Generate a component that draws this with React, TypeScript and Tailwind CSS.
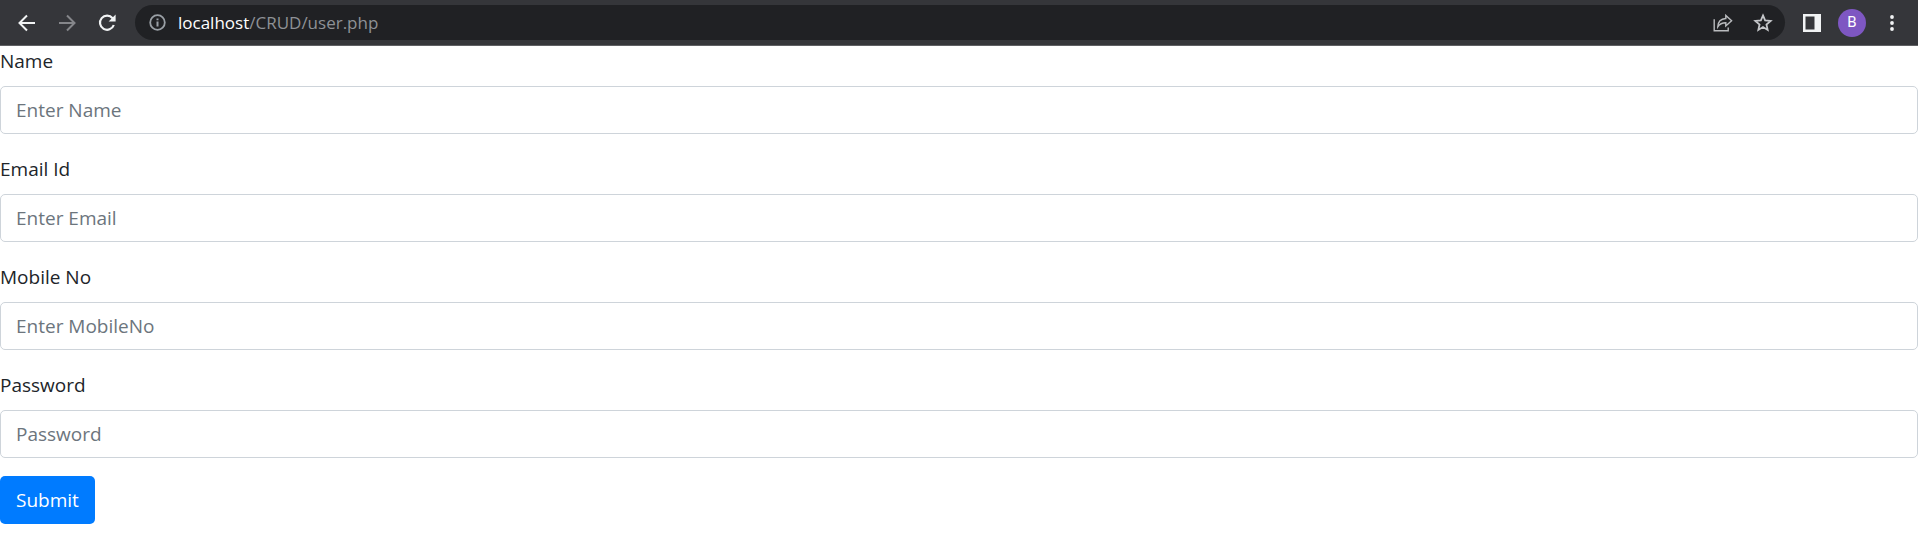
import React from "react";

const fields = [
  { id: "name", label: "Name", placeholder: "Enter Name", type: "text" },
  { id: "email", label: "Email Id", placeholder: "Enter Email", type: "email" },
  { id: "mobile", label: "Mobile No", placeholder: "Enter MobileNo", type: "text" },
  { id: "password", label: "Password", placeholder: "Password", type: "password" },
];

const iconButton = "flex size-7 shrink-0 items-center justify-center rounded-full";

function BrowserBar() {
  return (
    <header className="flex items-center border-b border-[#5f6063] bg-[#35363a] pt-[5px] pr-3 pb-[5px] pl-[13px]">
      <nav aria-label="Browser" className="mr-[14px] flex gap-3">
        <button type="button" aria-label="Back" className={iconButton}>
          <svg width="18" height="18" viewBox="0 0 18 18" fill="none" stroke="#f1f3f4" strokeWidth="2">
            <path d="M17 9H2M9 1.5 1.5 9 9 16.5" />
          </svg>
        </button>
        <button type="button" aria-label="Forward" className={iconButton}>
          <svg width="18" height="18" viewBox="0 0 18 18" fill="none" stroke="#85868a" strokeWidth="2">
            <path d="M1 9H16M9 1.5 16.5 9 9 16.5" />
          </svg>
        </button>
        <button type="button" aria-label="Reload" className={iconButton}>
          <svg width="18" height="18" viewBox="0 0 18 18" fill="none">
            <path d="M14.6 4.2A7.1 7.1 0 1 0 15.8 11" stroke="#f1f3f4" strokeWidth="2.2" />
            <path d="M17.6 0.6V7.6H10.6z" fill="#f1f3f4" />
          </svg>
        </button>
      </nav>
      <div className="flex h-[35px] min-w-0 flex-1 items-center rounded-full bg-[#202124] pr-2 pl-2">
        <button type="button" aria-label="View site information" className={iconButton}>
          <svg width="17" height="17" viewBox="0 0 17 17" fill="none">
            <circle cx="8.5" cy="8.5" r="7.3" stroke="#9aa0a6" strokeWidth="1.8" />
            <path d="M8.5 7.5v5M8.5 4.4v1.9" stroke="#9aa0a6" strokeWidth="2" />
          </svg>
        </button>
        <div className="ml-[7px] min-w-0 flex-1 truncate text-[17px] leading-6 text-[#8e9196]">
          <span className="text-white">localhost</span>/CRUD/user.php
        </div>
        <div className="flex gap-3">
          <button type="button" aria-label="Share" className={iconButton}>
            <svg width="20" height="18" viewBox="0 0 20 18" fill="none" stroke="#b9bbbe" strokeWidth="1.4">
              <path d="M1.2 5.2V16.8H15.2V13.6" />
              <path d="M4.8 12.8C5 7.8 7.8 4.8 12.8 4.5V1.4L18.6 6.7 12.8 12V8.8C9.2 8.8 6.6 10 4.8 12.8z" />
            </svg>
          </button>
          <button type="button" aria-label="Bookmark this page" className={iconButton}>
            <svg width="20" height="20" viewBox="0 0 18 18" fill="none" stroke="#c4c6c9" strokeWidth="1.6">
              <path d="M9 2.2 10.9 6.7 15.9 7.1 12.1 10.4 13.2 15.2 9 12.7 4.8 15.2 5.9 10.4 2.1 7.1 7.1 6.7z" />
            </svg>
          </button>
        </div>
      </div>
      <div className="ml-[13px] flex items-center gap-3">
        <button type="button" aria-label="Side panel" className={iconButton}>
          <svg width="18" height="18" viewBox="0 0 18 18">
            <path fillRule="evenodd" fill="#f1f3f4" d="M0 0H18V18H0zM2.5 2.5V15.5H11.5V2.5z" />
          </svg>
        </button>
        <button
          type="button"
          aria-label="Profile"
          className="flex size-7 items-center justify-center rounded-full bg-[#7e57c2] font-['Roboto',sans-serif] text-[15px] text-white"
        >
          B
        </button>
        <button type="button" aria-label="Menu" className={iconButton}>
          <svg width="4" height="18" viewBox="0 0 4 18" fill="#f1f3f4">
            <circle cx="2" cy="3" r="1.9" />
            <circle cx="2" cy="9" r="1.9" />
            <circle cx="2" cy="15" r="1.9" />
          </svg>
        </button>
      </div>
    </header>
  );
}

export default function App() {
  return (
    <div className="min-h-screen bg-white font-['Open_Sans',sans-serif] text-[#212529]">
      <BrowserBar />
      <form className="text-[19px] leading-[30px]" onSubmit={(e) => e.preventDefault()}>
        <div className="flex flex-col gap-5">
          {fields.map((f) => (
            <div key={f.id} className="flex flex-col gap-[10px]">
              <label htmlFor={f.id} className="self-start">
                {f.label}
              </label>
              <input
                id={f.id}
                name={f.id}
                type={f.type}
                placeholder={f.placeholder}
                autoComplete="off"
                className="h-12 w-full rounded-[5px] border border-[#ced4da] bg-white px-[15px] text-[#495057] placeholder:text-[#6c757d]"
              />
            </div>
          ))}
        </div>
        <button type="submit" className="mt-[18px] h-12 rounded-[5px] bg-[#007bff] px-4 text-white">
          Submit
        </button>
      </form>
    </div>
  );
}
